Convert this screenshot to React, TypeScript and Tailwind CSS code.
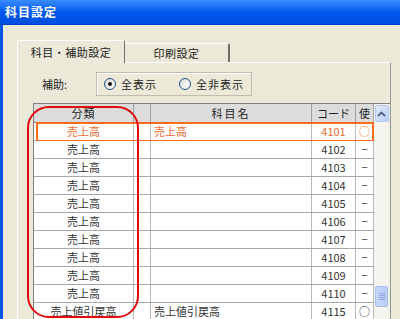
import React from "react";

const rows = [
  { cat: "売上高", name: "売上高", code: "4101", use: "○", sel: true },
  { cat: "売上高", name: "", code: "4102", use: "−" },
  { cat: "売上高", name: "", code: "4103", use: "−" },
  { cat: "売上高", name: "", code: "4104", use: "−" },
  { cat: "売上高", name: "", code: "4105", use: "−" },
  { cat: "売上高", name: "", code: "4106", use: "−" },
  { cat: "売上高", name: "", code: "4107", use: "−" },
  { cat: "売上高", name: "", code: "4108", use: "−" },
  { cat: "売上高", name: "", code: "4109", use: "−" },
  { cat: "売上高", name: "", code: "4110", use: "−" },
  { cat: "売上値引戻高", name: "売上値引戻高", code: "4115", use: "○" },
];

function Radio({ checked }: { checked: boolean }) {
  return (
    <span className="relative w-[12px] h-[12px] rounded-full border border-[#1C5180] bg-gradient-to-br from-[#DCDCD7] to-white flex items-center justify-center">
      {checked && <span className="w-[4px] h-[4px] rounded-full bg-[#111]" />}
    </span>
  );
}

export default function App() {
  return (
    <div
      className="relative w-[400px] h-[319px] overflow-hidden bg-[#ECE9D8] text-[11px] text-[#222]"
      style={{ fontFamily: '"Noto Sans CJK JP", "Noto Sans", sans-serif' }}
    >
      {/* title bar */}
      <div className="h-[25px] bg-gradient-to-b from-[#3A8CFF] via-[#0058EE] to-[#0050DE] border-b border-[#0040C0] flex items-center pl-[5px]">
        <span className="text-white font-bold text-[12px] leading-none tracking-[1px]">科目設定</span>
      </div>
      <div className="flex h-[294px]">
        <div className="w-[3px] bg-[#0055E5]" />
        <div className="flex-1 pl-[14px] pt-[15px]">
          {/* tabs */}
          <div className="flex items-end h-[22px]">
            <div className="w-[108px] h-[23px] -mb-px relative z-10 bg-[#ECE9D8] border-t border-l border-white border-r border-r-[#716F64] rounded-t-[2px] flex items-center justify-center">
              <span className="tracking-[0.5px]">科目・補助設定</span>
            </div>
            <div className="w-[105px] h-[19px] bg-[#ECE9D8] border-t border-white border-r-2 border-r-[#716F64] rounded-t-[2px] flex items-center justify-center">
              <span className="tracking-[0.5px]">印刷設定</span>
            </div>
          </div>
          {/* panel */}
          <div className="w-[374px] h-[260px] border-t border-l border-white border-r border-r-[#919B9C] pl-[15px] pt-[9px]">
            <div className="flex items-center h-[24px]">
              <span className="w-[63px] pl-[9px]">補助:</span>
              <div className="w-[156px] h-[24px] border border-[#C0BDAE] shadow-[inset_1px_1px_0_white] flex items-center pl-[7px]">
                <Radio checked />
                <span className="ml-[5px] w-[58px] tracking-[1px]">全表示</span>
                <Radio checked={false} />
                <span className="ml-[5px] tracking-[1px]">全非表示</span>
              </div>
            </div>
            {/* table */}
            <div className="mt-[7px] flex border-t border-l border-[#808080]">
              <div className="w-[340px]">
                <div className="grid grid-cols-[100px_17px_161px_44px_18px] h-[19px] bg-[#DCDCDC] border-b border-[#808080]">
                  <div className="border-r border-[#A0A0A0] flex items-center justify-center tracking-[1px]">分類</div>
                  <div className="border-r border-[#A0A0A0]" />
                  <div className="border-r border-[#A0A0A0] flex items-center justify-center tracking-[2px]">科目名</div>
                  <div className="border-r border-[#A0A0A0] flex items-center justify-center">コード</div>
                  <div className="border-r border-[#A0A0A0] flex items-center justify-center">使</div>
                </div>
                {rows.map((r, i) => (
                  <div
                    key={i}
                    className={`relative grid grid-cols-[100px_17px_161px_44px_18px] h-[18px] bg-white border-b border-[#A8A8A8] ${r.sel ? "text-[#EE6A2C]" : "text-[#333]"}`}
                  >
                    <div className="border-r border-[#B8B8B8] flex items-center justify-center">{r.cat}</div>
                    <div className="border-r border-[#B8B8B8]" />
                    <div className="border-r border-[#B8B8B8] flex items-center pl-[3px]">{r.name}</div>
                    <div className="border-r border-[#B8B8B8] flex items-center justify-center">{r.code}</div>
                    <div className="border-r border-[#B8B8B8] flex items-center justify-center">{r.use}</div>
                    {r.sel && (
                      <span className="absolute left-[2px] right-0 top-[-1px] bottom-[-2px] border-2 border-[#FF6A1F] pointer-events-none" />
                    )}
                  </div>
                ))}
              </div>
              {/* scrollbar */}
              <div className="w-[16px] bg-[#F5F4EE] border-r border-[#ECE9D8] flex flex-col items-center pt-[1px] relative">
                <div className="w-[14px] h-[17px] rounded-[2px] border border-[#B6C8F2] bg-gradient-to-br from-[#E2EBFD] to-[#B9CEF7] flex items-center justify-center">
                  <svg width="9" height="6" viewBox="0 0 9 6">
                    <path d="M1 5 L4.5 1.5 L8 5" fill="none" stroke="#4D6185" strokeWidth="1.8" />
                  </svg>
                </div>
                <div className="absolute top-[182px] left-[1px] w-[13px] h-[21px] rounded-[2px] border border-[#A8BEF4] bg-gradient-to-r from-[#C9D8FC] to-[#B8CCF8] flex flex-col items-center justify-center gap-[1px]">
                  <span className="w-[6px] h-px bg-[#8FA9E8]" />
                  <span className="w-[6px] h-px bg-[#8FA9E8]" />
                  <span className="w-[6px] h-px bg-[#8FA9E8]" />
                  <span className="w-[6px] h-px bg-[#8FA9E8]" />
                </div>
              </div>
            </div>
          </div>
        </div>
      </div>
      {/* red annotation */}
      <div className="absolute left-[27px] top-[106px] w-[112px] h-[212px] border-2 border-[#E00A0A] rounded-[22px] pointer-events-none" />
    </div>
  );
}
